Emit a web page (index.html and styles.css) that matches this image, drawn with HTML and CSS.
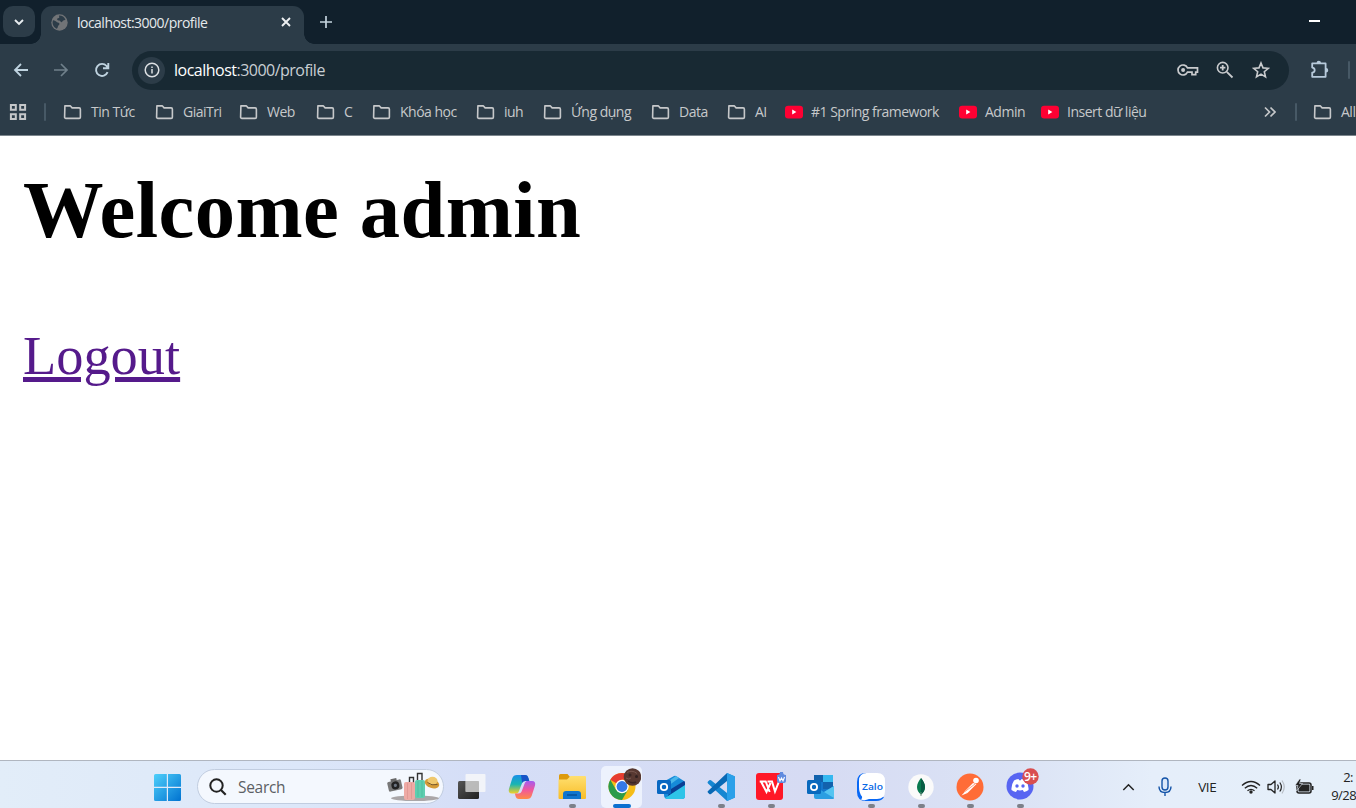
FILE: index.html
```html
<!DOCTYPE html>
<html lang="vi">
<head>
<meta charset="utf-8">
<title>localhost:3000/profile</title>
<link rel="stylesheet" href="styles.css">
</head>
<body>
<svg class="defs" width="0" height="0">
  <defs>
    <symbol id="folder" viewBox="0 0 20 16"><path d="M2 1.5h5.6l2 2.2H17a1.3 1.3 0 0 1 1.3 1.3v8.400a1.300 1.300 0 0 1-1.300 1.300H3a1.300 1.300 0 0 1-1.300-1.300z" fill="none" stroke="#c6c8ca" stroke-width="1.700" stroke-linejoin="round"/></symbol>
    <symbol id="youtube" viewBox="0 0 18 14"><rect y=".8" width="18" height="12.600" rx="3.200" fill="#ff0033"/><path d="M7.200 4.600v5l4.200-2.500z" fill="#fff"/></symbol>
    <linearGradient id="win" x1="0" y1="0" x2="1" y2="1"><stop offset="0" stop-color="#4fd0fb"/><stop offset="1" stop-color="#0072d0"/></linearGradient>
    <linearGradient id="dark" x1="0" y1="0" x2="1" y2="1"><stop offset="0" stop-color="#555"/><stop offset="1" stop-color="#202020"/></linearGradient>
    <linearGradient id="cool" x1="0" y1="0" x2="0" y2="1"><stop offset="0" stop-color="#1a8fe8"/><stop offset=".5" stop-color="#18b5b2"/><stop offset="1" stop-color="#f5cf24"/></linearGradient>
    <linearGradient id="warm" x1="0" y1="0" x2="0" y2="1"><stop offset="0" stop-color="#a45cf0"/><stop offset=".5" stop-color="#f0589c"/><stop offset="1" stop-color="#ff8a45"/></linearGradient>
    <linearGradient id="gold" x1="0" y1="0" x2="0" y2="1"><stop offset="0" stop-color="#ffdf70"/><stop offset="1" stop-color="#f8bd27"/></linearGradient>
  </defs>
</svg>
<div class="screen">
  <header class="tabstrip">
    <div class="tab-search"><svg width="12" height="12" viewBox="0 0 12 12"><path d="M2 4l4 4 4-4" fill="none" stroke="#e8edf0" stroke-width="1.900"/></svg></div>
    <div class="tab">
      <svg class="globe" width="17" height="17" viewBox="0 0 17 17"><circle cx="8.500" cy="8.500" r="8.200" fill="#717477"/><path d="M2 6.200c1.800.1 3 .9 4 2.100 1 .4 2.200.4 2.400 1.500.1 1.400-1.300 1.500-1.500 2.600-.1 1.200-.7 2-1.400 2.400A7 7 0 0 1 2 6.200zM8 1.600c2.700-.2 5.500 1.400 6.500 4.200l-2.200.7c-1 .4-.8 1.800-2 1.700-1-.1-.8-1.400-2-1.600-1-.3-2.200-.4-2.200-1.400 0-1.300 1.900-.8 2.200-1.800z" fill="#2c3c48"/></svg>
      <span class="tab-title">localhost:3000/profile</span>
      <svg class="close" width="10" height="10" viewBox="0 0 10 10"><path d="M1 1l8 8M9 1L1 9" stroke="#eef0f2" stroke-width="1.900"/></svg>
    </div>
    <svg class="newtab" width="14" height="14" viewBox="0 0 14 14"><path d="M7 1v12M1 7h12" stroke="#c4d3dd" stroke-width="1.700"/></svg>
    <div class="minimize"></div>
  </header>
  <nav class="toolbar">
    <svg width="16" height="16" viewBox="0 0 16 16"><path d="M15 8H2M8 2L2 8l6 6" fill="none" stroke="#bfd3e0" stroke-width="1.800"/></svg>
    <svg width="16" height="16" viewBox="0 0 16 16"><path d="M1 8h13M8 2l6 6-6 6" fill="none" stroke="#70808b" stroke-width="1.700"/></svg>
    <svg width="16" height="16" viewBox="0 0 16 16"><path d="M13.600 10.200A6 6 0 1 1 12.600 4L14 5.500M14.300 1v5.200H9" fill="none" stroke="#bfd3e0" stroke-width="1.900"/></svg>
    <div class="omnibox">
      <div class="site-info"><svg width="16" height="16" viewBox="0 0 16 16"><circle cx="8" cy="8" r="6.800" fill="none" stroke="#dcdfe2" stroke-width="1.500"/><path d="M8 7.100v4.400M8 4.400V6" stroke="#dcdfe2" stroke-width="1.500"/></svg></div>
      <span class="url"><b>localhost</b>:3000/profile</span>
      <svg class="key" width="22" height="14" viewBox="0 0 22 14"><path d="M10.500 4.800A5 5 0 1 0 10.500 9.200H15v2.400h3.700V9.200h1.800V4.800z" fill="none" stroke="#c9cbce" stroke-width="1.700"/><circle cx="6.100" cy="7" r="2" fill="#c9cbce"/></svg>
      <svg class="mag" width="18" height="18" viewBox="0 0 18 18"><circle cx="6.700" cy="6.700" r="5.300" fill="none" stroke="#c9cbce" stroke-width="1.600"/><path d="M10.800 10.800l5.700 5.700M6.700 4v5.400M4 6.700h5.400" stroke="#c9cbce" stroke-width="1.800"/></svg>
      <svg class="star" width="18" height="18" viewBox="0 0 18 18"><path d="M9 2l2 4.900 5.300.4-4 3.400 1.200 5.200L9 13.100l-4.500 2.800 1.200-5.200-4-3.400L7 6.900z" fill="none" stroke="#c9cbce" stroke-width="1.600"/></svg>
    </div>
    <svg class="puzzle" width="20" height="20" viewBox="0 0 20 20"><path d="M2.200 3.400h13.400v13.400H2.200v-4.200c3.300-.3 3.300-4.600 0-5z" fill="none" stroke="#b7cadb" stroke-width="1.800" stroke-linejoin="round"/><path d="M6.600 3a2.200 2.200 0 0 1 4.400 0zM16 7.900a2.200 2.200 0 0 1 0 4.500z" fill="#b7cadb"/></svg>
    <i class="divider"></i>
  </nav>
  <nav class="bookmarks">
    <svg width="18" height="18" viewBox="0 0 18 18"><path d="M1.900 1.900h4.900v4.900H1.900zM11.200 1.900H16.100v4.900h-4.900zM1.900 11.200h4.900V16.100H1.900zM11.200 11.200H16.100V16.100h-4.900z" fill="none" stroke="#c6c8ca" stroke-width="2"/></svg>
    <i class="divider"></i>
    <a class="bookmark"><svg><use href="#folder"/></svg><span>Tin Tức</span></a>
    <a class="bookmark"><svg><use href="#folder"/></svg><span>GiaiTri</span></a>
    <a class="bookmark"><svg><use href="#folder"/></svg><span>Web</span></a>
    <a class="bookmark"><svg><use href="#folder"/></svg><span>C</span></a>
    <a class="bookmark"><svg><use href="#folder"/></svg><span>Khóa học</span></a>
    <a class="bookmark"><svg><use href="#folder"/></svg><span>iuh</span></a>
    <a class="bookmark"><svg><use href="#folder"/></svg><span>Ứng dụng</span></a>
    <a class="bookmark"><svg><use href="#folder"/></svg><span>Data</span></a>
    <a class="bookmark"><svg><use href="#folder"/></svg><span>AI</span></a>
    <a class="bookmark video"><svg><use href="#youtube"/></svg><span>#1 Spring framework</span></a>
    <a class="bookmark video"><svg><use href="#youtube"/></svg><span>Admin</span></a>
    <a class="bookmark video"><svg><use href="#youtube"/></svg><span>Insert dữ liệu</span></a>
    <svg width="12" height="12" viewBox="0 0 12 12"><path d="M1 1.500L5.500 6 1 10.500M6.500 1.500L11 6l-4.500 4.500" fill="none" stroke="#c6c8ca" stroke-width="1.700"/></svg>
    <i class="divider"></i>
    <a class="bookmark"><svg><use href="#folder"/></svg><span>All</span></a>
  </nav>
  <main class="page">
    <h1>Welcome admin</h1>
    <a class="logout" href="#">Logout</a>
  </main>
  <footer class="taskbar">
    <svg class="start" width="27" height="27" viewBox="0 0 27 27"><path d="M1.500 0H12.800V12.800H0V1.500Q0 0 1.500 0ZM14 0H25.500Q27 0 27 1.500V12.800H14ZM0 14H12.800V27H1.500Q0 27 0 25.500ZM14 14H27V25.500Q27 27 25.500 27H14Z" fill="url(#win)"/></svg>
    <div class="search">
      <svg width="18" height="18" viewBox="0 0 18 18"><circle cx="7.500" cy="7.500" r="6.200" fill="none" stroke="#222" stroke-width="2"/><path d="M12 12l4.700 4.700" stroke="#222" stroke-width="2.200"/></svg>
      <span>Search</span>
      <svg class="travel" width="54" height="30" viewBox="0 0 54 30">
        <ellipse cx="28" cy="26.300" rx="24" ry="2.800" fill="#aaa6a8"/>
        <g transform="rotate(-13 8 14)"><rect x="1" y="8.500" width="14" height="10" rx="1.500" fill="#787878"/><rect x="5" y="6.500" width="6" height="3" fill="#686868"/><circle cx="8.500" cy="13.500" r="4" fill="#222"/><circle cx="8.500" cy="13.500" r="1.600" fill="#6b7480"/></g>
        <path d="M22.500 11V5.500h4V11M30.500 9V1.500h4.500V9" fill="none" stroke="#333" stroke-width="1.400"/>
        <rect x="28" y="8" width="10" height="18" rx="2" fill="#5fceb0"/><path d="M31 9v16M35 9v16" stroke="#48b99b" stroke-width=".7"/>
        <rect x="17" y="10" width="11" height="18" rx="2" fill="#eeaaa5"/><path d="M20.500 11v16M24.500 11v16" stroke="#dc938f" stroke-width=".7"/>
        <ellipse cx="45" cy="11.500" rx="7.500" ry="4.500" transform="rotate(18 45 11.500)" fill="#d49a37"/><ellipse cx="45.500" cy="8.800" rx="5" ry="4" fill="#efc86e"/><path d="M40.500 10.500q4 3.500 10 2" fill="none" stroke="#79582b" stroke-width="1"/>
      </svg>
    </div>
    <div class="app"><svg width="28" height="28" viewBox="0 0 28 28"><rect x="0" y="8" width="21" height="18" rx="1.500" fill="url(#dark)"/><rect x="7.500" y="1" width="20" height="18" rx="1" fill="#fafafa" fill-opacity=".78"/><path d="M7.500 8H21v11H7.500z" fill="#aaa" fill-opacity=".55"/></svg></div>
    <div class="app"><svg width="28" height="28" viewBox="0 0 28 28"><path d="M9 2h8c2 0 2.800 1 3.400 3l.9 3h-4c-2 0-3 1-3.600 3L11 18c-.6 2-1.500 2.500-3.500 2.500H4C1.200 20.500.2 18.500 1 15.700L4.200 5.500C5 3 6.500 2 9 2z" fill="url(#cool)"/><path d="M13 2h4c2 0 2.800 1 3.400 3l.9 3h-4c-1.500 0-2.500.7-3.200 2z" fill="#1753c7"/><path d="M19 26h-8c-2 0-3-1-3.500-3l-.6-2.500h3.500c2 0 3-1 3.600-3l2.600-7c.8-2 1.700-2.500 3.400-2.500h4c2.800 0 3.700 2 3 4.500l-3.200 10c-.8 2.500-2.300 3.500-4.800 3.500z" fill="url(#warm)"/></svg></div>
    <div class="app running"><svg width="28" height="28" viewBox="0 0 28 28"><path d="M1 2.500Q1 1 2.500 1h7L12 4v5H1z" fill="#dd9a0c"/><path d="M.5 6.500H9L12.500 3H27q1 0 1 1v21q0 1-1 1H1.500q-1 0-1-1z" fill="url(#gold)"/><path d="M5 26v-5q0-3 3-3h12q3 0 3 3v5z" fill="#0f75cf"/><path d="M9 22h10" stroke="#075099" stroke-width="1.500"/></svg></div>
    <div class="app active"><svg width="34" height="34" viewBox="0 0 34 34"><circle cx="15" cy="19.500" r="13.500" fill="#f5bd18"/><path d="M3.300 12.750A13.500 13.500 0 0 1 26.700 12.750H15V19.500z" fill="#e63c31"/><path d="M3.300 12.750L9.150 22.900 15 26.250 20.850 22.900 15 33A13.500 13.500 0 0 1 3.300 12.750z" fill="#2c9c4a"/><circle cx="15" cy="19.500" r="6.700" fill="#fff"/><circle cx="15" cy="19.500" r="5.400" fill="#3479e8"/><circle cx="25.500" cy="10" r="8.800" fill="#573831"/><circle cx="23" cy="8" r="1.500" fill="#382523"/><circle cx="29.500" cy="9.500" r="1.500" fill="#302020"/><path d="M21 14q4 3 8 1" fill="none" stroke="#3b2524" stroke-width="1.500"/><path d="M20 5.500q5-3 10 1M19 11q3 2 5 0" fill="none" stroke="#795850"/></svg></div>
    <div class="app"><svg width="28" height="26" viewBox="0 0 28 26"><path d="M6 8L17 2q1-.5 2 0l8 5q1 .7 1 2v13q0 3-3 3H11q-4 0-4-4z" fill="#168bd9"/><path d="M14 15L27 7q1 .7 1 2v3L10 24z" fill="#0a3f94"/><path d="M9 9l10-7 3 2-11 8z" fill="#49b6ea"/><path d="M28 11v11q0 3-3 3H11q-2 0-3-1z" fill="#2ec4e8"/><rect x="0" y="6" width="14" height="14" rx="1.500" fill="#0868c2"/><circle cx="7" cy="13" r="3.200" fill="none" stroke="#fff" stroke-width="1.800"/></svg></div>
    <div class="app running"><svg width="28" height="28" viewBox="0 0 28 28"><path d="M20 0l8 3.500v21L20 28 1 10.500q-1-1 0-2l1.300-1.200q.7-.7 1.700 0L20 20z" fill="#1687d2"/><path d="M20 0v8L4 21q-1 .7-1.700 0L1 19.700q-1-1 0-1.700z" fill="#0969b5"/><path d="M20 0l7 3q1 .5 1 1.500v19q0 1-1 1.500l-7 3z" fill="#2ba0e9"/></svg></div>
    <div class="app running"><svg class="wps" width="32" height="32" viewBox="0 0 32 32"><rect x="1" y="4" width="27" height="27" rx="3" fill="#ff1827"/><path d="M12.500 12.500H17l3 10 4-10M6 12.500l5.500 10.500 4-9M4.700 12.500h6l4 10.500" fill="none" stroke="#fff" stroke-width="2"/><path d="M22 6q3 0 3-3h3q0 3 3 3v6q0 2-2 2h-5q-2 0-2-2z" fill="#608bdf"/><path d="M23.500 8l1.500 4 1.500-3 1.500 3 1.500-4" fill="none" stroke="#fff" stroke-width="1.100"/></svg></div>
    <div class="app"><svg width="28" height="26" viewBox="0 0 28 26"><rect x="7" y="1" width="19" height="22" rx="1.500" fill="#1377cd"/><path d="M16 1h10v7H16z" fill="#35b8f0"/><path d="M7 1h9v7H7zM16 8h10v7H16z" fill="#1262ad"/><path d="M7 12l10 6 10-6v12q0 1-1 1H9q-2 0-2-2z" fill="#2b9ee2"/><path d="M27 12v12L17 18z" fill="#55c4f1"/><rect x="0" y="6" width="14" height="14" rx="1.500" fill="#0869bd"/><circle cx="7" cy="13" r="3.100" fill="none" stroke="#fff" stroke-width="1.800"/></svg></div>
    <div class="app running"><svg width="28" height="28" viewBox="0 0 28 28"><path d="M9 0Q0 0 0 9v10q0 9 9 9h10q6 0 8-4L8 22z" fill="#0868f5"/><path d="M10 0h10q8 0 8 8v10q0 8-8 8h-8q-4 2-8 .5 1.700-1.300 1-3Q2 20 2 14V8q0-8 8-8z" fill="#fff"/><text x="5" y="16.500" class="zalo" textLength="21" lengthAdjust="spacingAndGlyphs">Zalo</text></svg></div>
    <div class="app running"><svg width="26" height="26" viewBox="0 0 26 26"><circle cx="13" cy="13" r="12.700" fill="#fafafa"/><path d="M13 4c2 2.800 4 5.500 4 9s-1.500 5.500-4 7.500c-2.500-2-4-4-4-7.500s2-6.200 4-9z" fill="#087a4f"/><path d="M13 4c2 2.800 4 5.500 4 9s-1.500 5.500-4 7.500z" fill="#075b43"/><path d="M13 18v4" stroke="#688c7d"/></svg></div>
    <div class="app running"><svg width="28" height="28" viewBox="0 0 28 28"><circle cx="14" cy="14" r="13.500" fill="#ff6c37"/><circle cx="20" cy="7.500" r="2.800" fill="#fff"/><path d="M8.500 18.500l8.500-8.500 3.500 1-9 9z" fill="#fff"/><path d="M5.500 22.500l4-4.500 2 2z" fill="#fff"/><path d="M9 18.500l10-7.500" stroke="#ff8a60" stroke-width=".8"/></svg></div>
    <div class="app running"><svg class="discord" width="34" height="34" viewBox="0 0 34 34"><circle cx="15" cy="19" r="13.500" fill="#5865f2"/><path d="M9 13.500q2.500-1.500 4.500-1.500l.7 1.200h1.600L16.500 12q2 0 4.500 1.500 3 4.500 2.500 9.500-2 1.700-4.500 2l-1.200-2q-2.800.8-5.600 0L11 25q-2.500-.3-4.500-2-.5-5 2.500-9.500z" fill="#fff"/><circle cx="12" cy="19" r="1.700" fill="#5865f2"/><circle cx="18" cy="19" r="1.700" fill="#5865f2"/><circle cx="25.500" cy="9.500" r="8.200" fill="#d94e50"/><text x="19" y="13.500" class="count" textLength="13">9+</text></svg></div>
    <div class="tray">
      <svg width="13" height="8" viewBox="0 0 12 8"><path d="M.8 7L6 1.700 11.200 7" fill="none" stroke="#222" stroke-width="1.500"/></svg>
      <svg width="14" height="20" viewBox="0 0 14 20"><rect x="4" y="1" width="6" height="12" rx="3" fill="#dbe8fa" stroke="#1454a8" stroke-width="1.400"/><path d="M1 9.500q0 6 6 6t6-6M7 15.500V19" fill="none" stroke="#1454a8" stroke-width="1.400"/></svg>
      <span>VIE</span>
      <svg width="20" height="14" viewBox="0 0 20 14"><path d="M1 5.500q9-8 18 0M3.800 8.200q6.200-5.400 12.400 0M6.500 10.800q3.500-3 7 0" fill="none" stroke="#222" stroke-width="1.300"/><circle cx="10" cy="12" r="1.700" fill="#222"/></svg>
      <svg width="18" height="16" viewBox="0 0 18 16"><path d="M1 5.500h3L8 2v12l-4-3.500H1z" fill="none" stroke="#222" stroke-width="1.300" stroke-linejoin="round"/><path d="M10.500 5.500q1.800 2.500 0 5M12.800 3.500q3.200 4.500 0 9" fill="none" stroke="#222" stroke-width="1.200"/><path d="M15 1.500q4.500 6.500 0 13" fill="none" stroke="#b7bdc5" stroke-width="1.200"/></svg>
      <svg width="19" height="16" viewBox="0 0 19 16"><rect x="2" y="4" width="14" height="10" rx="2" fill="none" stroke="#222" stroke-width="1.500"/><rect x="3.500" y="5.500" width="11" height="7" fill="#222"/><path d="M17 7h1.500v4H17z" fill="#222"/><path d="M4.500 0L0 6.500h3L1.500 12 7.500 4.500h-3L6 0z" fill="#222" stroke="#e4edf9" stroke-width=".6"/></svg>
      <div class="clock"><span class="time">2:</span><span>9/28</span></div>
    </div>
  </footer>
</div>
</body>
</html>
```

FILE: styles.css
```css
* { box-sizing: border-box; }
body { margin: 0; background: #fff; font-family: "Open Sans", "Noto Sans", sans-serif; overflow: hidden; }
.defs { position: absolute; }
svg { display: block; flex: none; }
.screen { width: 1356px; height: 808px; display: flex; flex-direction: column; overflow: hidden; }

.tabstrip { height: 44px; flex: none; display: flex; background: #11202c; padding-left: 3px; }
.tab-search { width: 32px; height: 31px; margin: 6px 6px 0 0; border-radius: 10px; background: #2c3c48; display: grid; place-items: center; }
.tab { position: relative; width: 263px; height: 38px; margin-top: 6px; padding: 0 13px 6px 10px; display: flex; align-items: center; background: #2c3c48; border-radius: 11px 11px 0 0; }
.tab::before, .tab::after { content: ""; position: absolute; bottom: 0; width: 10px; height: 10px; }
.tab::before { left: -10px; background: radial-gradient(circle at 0 0, transparent 9.5px, #2c3c48 10px); }
.tab::after { right: -10px; background: radial-gradient(circle at 100% 0, transparent 9.5px, #2c3c48 10px); }
.tab-title { margin-left: 9px; font-size: 14px; letter-spacing: -0.52px; color: #e5e9ec; white-space: nowrap; }
.close { margin-left: auto; }
.newtab { margin: 15px 0 0 15px; }
.minimize { width: 11px; height: 2px; margin: 20px 36px 0 auto; background: #fff; }

.toolbar { height: 53px; flex: none; background: #2c3c48; display: grid; grid-template-columns: 40px 41px 38px 1157px 21px 27px 8px; align-items: center; padding: 0 0 1px 13px; }
.omnibox { height: 39px; border-radius: 20px; background: #182933; display: flex; align-items: center; padding-left: 6px; }
.site-info { width: 27px; height: 27px; border-radius: 50%; background: #2c3c48; display: grid; place-items: center; }
.url { margin-left: 9px; font-size: 16px; letter-spacing: -0.51px; color: #c9cfd3; white-space: nowrap; }
.url b { font-weight: 400; color: #fff; }
.key { margin-left: auto; }
.mag { margin-left: 17px; }
.star { margin: 0 19px 0 18px; }
.puzzle { margin-left: 21px; }
.divider { width: 2px; height: 18px; background: #475966; border-radius: 1px; }
.toolbar .divider { margin-left: 38px; }

.bookmarks { height: 39px; flex: none; background: #2c3c48; border-bottom: 1px solid #7c868d; padding: 0 0 9px 9px; overflow: hidden; display: grid; grid-template-columns: 35px 19px 92px 84px 77px 56px 104px 67px 108px 76px 58px 174px 82px 223px 31px 18px 120px; align-items: center; }
.bookmark { display: flex; align-items: center; color: #c7c9cb; font-size: 14px; letter-spacing: -0.5px; white-space: nowrap; }
.bookmark svg { width: 19px; height: 16px; margin-right: 9px; }
.bookmark.video svg { width: 18px; height: 14px; margin: 0 8px 0 0; }

.page { height: 624px; flex: none; padding: 28px 23px 0; font-family: "Liberation Serif", serif; }
.page h1 { margin: 0; font-size: 80.6px; line-height: 92px; font-weight: 700; letter-spacing: 0.42px; color: #000; }
.logout { display: inline-block; margin-top: 69px; font-size: 54.4px; line-height: 62px; color: #551a8b; text-decoration: underline; text-decoration-thickness: 5px; }

.taskbar { height: 48px; flex: none; border-top: 1px solid #b0b6c0; background: linear-gradient(90deg, #e2edf9, #dce7f9 22%, #d5def7 35%, #d6dbf3 60%, #dbe3f5 75%, #e5eefa 85%, #e5eff9); display: grid; grid-template-columns: 43px 250px repeat(12, 49.85px) 316px; padding-left: 154px; align-items: center; overflow: hidden; }
.start { margin-top: 5px; }
.search { width: 247px; height: 35px; margin-top: 4px; border: 1px solid #c1cde0; border-radius: 18px; background: #f4f8fe; display: flex; align-items: center; padding-left: 11px; }
.search span { margin-left: 11px; color: #5c5f64; font-size: 15.5px; letter-spacing: -0.3px; }
.travel { margin: 0 2px 0 auto; }
.app { position: relative; height: 47px; display: grid; place-items: center; padding: 4px 0 0; }
.app.active::before { content: ""; position: absolute; left: 4px; top: 5px; width: 41px; height: 42px; border-radius: 5px; background: #edf2fd; }
.app.active svg { position: relative; margin: -6px 0 0 5px; }
.wps { margin-top: -4px; }
.discord { margin: -6px 0 0 4px; }
.running::after, .active::after { content: ""; position: absolute; bottom: 0; left: 22px; width: 7px; height: 4px; border-radius: 2px; background: #7c8089; }
.active::after { left: 16px; width: 18px; background: #0b70d0; }
.zalo { font: 600 9.5px "Open Sans", sans-serif; fill: #0868e5; }
.count { font: 600 12px "Open Sans", sans-serif; fill: #fff; }
.tray { display: grid; grid-template-columns: 36px 40px 43px 26px 28px 36px 90px; align-items: center; padding: 5px 0 0 77px; color: #222; font-size: 13.5px; letter-spacing: -0.3px; }
.clock { display: flex; flex-direction: column; line-height: 18px; font-size: 13px; letter-spacing: -0.5px; padding-bottom: 2px; }
.time { margin-left: 12px; }
```
